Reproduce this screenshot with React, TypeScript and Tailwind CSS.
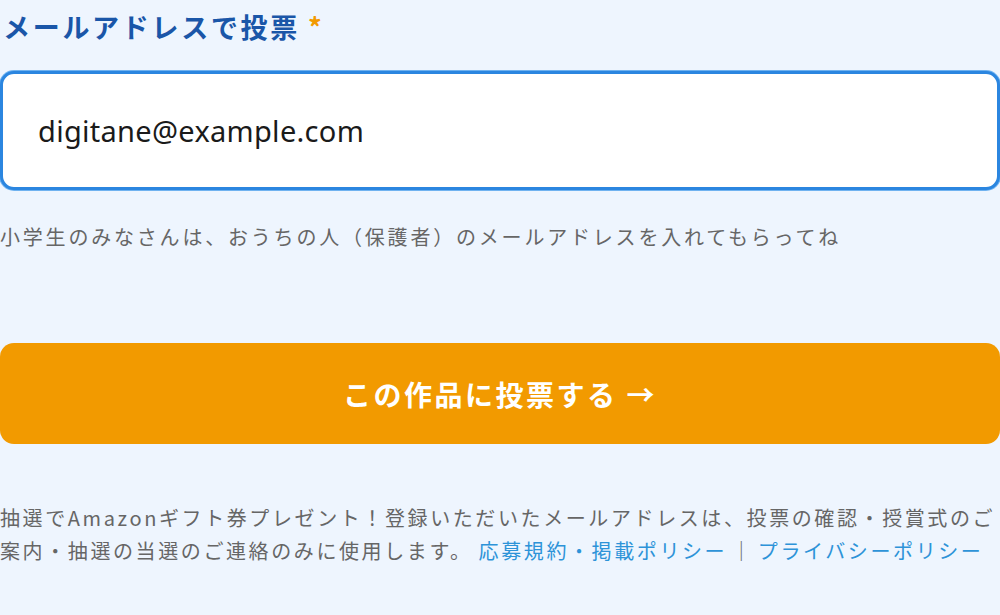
import React from "react";

const jp = { fontFamily: '"Noto Sans CJK JP", "Noto Sans", sans-serif' };

export default function App() {
  return (
    <div
      className="min-h-[615px] w-[1000px] overflow-hidden bg-[#eef5fe] pt-[7px]"
      style={jp}
    >
      {/* label */}
      <label className="flex items-center pl-[3px] text-[27px] font-bold leading-[40px] tracking-[0.1em] text-[#1a56a8]">
        メールアドレスで投票
        <span className="ml-[8px] text-[#f29a00]">*</span>
      </label>

      {/* email input */}
      <div className="mt-[24px] flex h-[119px] items-center rounded-[14px] border-[3px] border-[#2b86e0] bg-white pl-[35px] shadow-[0_0_0_1px_#6fb2f0]">
        <span
          className="text-[29px] tracking-[0.01em] text-[#1a1a1a]"
          style={{ fontFamily: '"Noto Sans", sans-serif' }}
        >
          digitane@example.com
        </span>
      </div>

      <p className="mt-[33px] text-[20px] leading-[28px] tracking-[0.14em] text-[#666]">
        小学生のみなさんは、おうちの人（保護者）のメールアドレスを入れてもらってね
      </p>

      {/* submit */}
      <button className="mt-[92px] flex h-[101px] w-full items-center justify-center rounded-[14px] bg-[#f29a00] text-[28px] font-bold tracking-[0.09em] text-white">
        この作品に投票する →
      </button>

      <p className="mt-[57px] text-[20px] leading-[33px] tracking-[0.13em] text-[#666]">
        抽選でAmazonギフト券プレゼント！登録いただいたメールアドレスは、投票の確認・授賞式のご案内・抽選の当選のご連絡のみに使用します。
        <a className="ml-[6px] text-[#2d93d8]">応募規約・掲載ポリシー</a>
        <span className="mx-[4px]">｜</span>
        <a className="text-[#2d93d8]">プライバシーポリシー</a>
      </p>
    </div>
  );
}
